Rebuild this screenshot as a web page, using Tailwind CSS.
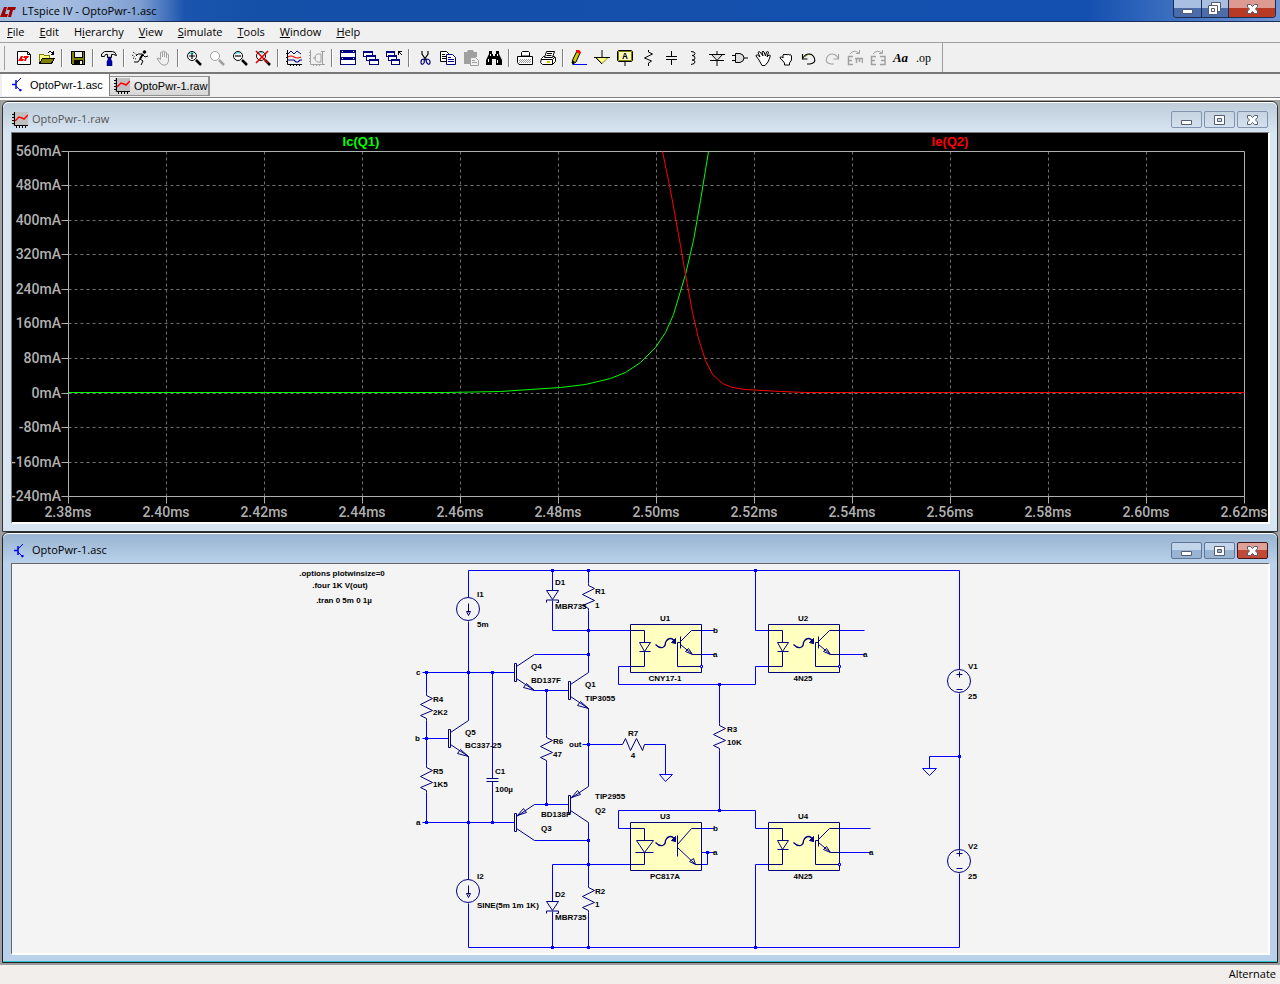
<!DOCTYPE html>
<html lang="en">
<head>
    <meta charset="UTF-8">
    <title>LTspice IV - OptoPwr-1.asc</title>
    <script src="https://cdn.jsdelivr.net/npm/@tailwindcss/browser@4"></script>
</head>
<body class="flex min-h-screen flex-col bg-[#f0f0f0] font-['Open_Sans',sans-serif] text-[11px] text-black">
    <!-- Shared symbols -->
    <svg class="hidden">
        <defs>
            <g id="logo"><path fill="#a00000" d="M4 3h3L5 10h3l-1 3H0zM8 3h8l-1 3h-2l-2 7H8l2-7H7z"/></g>
            <g id="asc" fill="none" stroke="#00f"><path stroke-width="1.500" d="M2 7.500h4M6 3v9"/><path d="M6 6l5-5M6 9l5 5"/><path fill="#00f" d="M9.500 13.500l1.500-1.500v2z"/></g>
            <g id="raw"><path fill="#c0c0c0" d="M1 0h15v14H1z"/><path fill="none" stroke="#000" d="M2.500 0v13.500H16M0 2.500h2M0 5.500h2M0 8.500h2M0 11.500h2M4.500 14v2M7.500 14v2M10.500 14v2M13.500 14v2"/><path fill="none" stroke="#f00" stroke-width="1.500" d="M3 9l4-4 3 1 2 1 4-4"/></g>
            <g id="min"><path fill="#fff" stroke="#555b70" d="M.5 7.500h10v4H.5z"/></g>
            <g id="max"><path fill="#fff" fill-rule="evenodd" stroke="#555b70" d="M.5 2.500h10v9H.5zM3.500 5.500h4v3h-4z"/></g>
            <g id="close"><path fill="#fff" stroke="#555b70" d="M.5 2.500h3l2 2 2-2h3v2L8.500 7l2 2v2.500h-3l-2-2-2 2h-3V9l2-2-2-2z"/></g>
            <g id="mag"><circle cx="6" cy="6" r="4.500" fill="#fff" stroke="currentColor"/><path stroke="currentColor" stroke-width="2.500" d="M10 10l5 5"/></g>
            <g id="resv"><path d="M0 0v2l6 3-12 6 12 6-12 5 6 3v2"/></g>
            <g id="npn"><path d="M-20-9h2V9h-2zM-18-6L0-18M-18 6L0 18M-11 15l3-4 8 7z"/></g>
            <g id="pnp"><path d="M-20-9h2V9h-2zM-18-6L0-18M-18 6L0 18M-17-7l6-7 3 4z"/></g>
            <g id="diode"><path d="M-6 0H6L0 9zM-6 12V9.500H6V12h-2"/></g>
            <g id="light"><path d="M25 20q4 4 7 3t3-5q2-4 5-4t5 5" stroke-width="1.300"/><path fill="#000080" d="M41 18l4 1v-5z"/></g>
            <g id="opto">
                <path fill="#ffffc0" d="M0 0h71v48H0z"/>
                <path d="M0 6h14v12M9 18h11l-6 9zM9 27h11M14 27v15H0M50 12v12M50 18h-3v24h24M50 17L61 6h10M50 20l12 10h9M55 27l3-3 4 6z"/>
                <use href="#light"/>
                <path stroke="#00f" fill="#fff" d="M70 41h2v2h-2z"/>
            </g>
        </defs>
    </svg>

    <!-- Title bar -->
    <header class="flex h-[22px] items-start border-b border-[#1a2d58] bg-[linear-gradient(90deg,#9fb8de_0,#a8bfe2_60px,#7f9fd2_140px,#1a54ae_185px,#1450a8_260px,#1450b0_85%,#6f96d4_100%)]">
        <svg class="mt-1 size-4" viewBox="0 0 16 16"><use href="#logo"/></svg>
        <h1 class="ml-1.5 flex-1 text-[11px] leading-[21px]">LTspice IV - OptoPwr-1.asc</h1>
        <div class="mr-1 flex h-[18px] overflow-hidden rounded-b border border-t-0 border-[#1b2b52]">
            <button aria-label="Minimize" class="grid w-7 place-items-center border-r border-[#1b2b52] bg-linear-to-b from-[#a9bfe2] from-50% to-[#4a6cab] to-50%"><svg class="h-3.5 w-[11px]" viewBox="0 0 11 14"><use href="#min"/></svg></button>
            <button aria-label="Restore" class="grid w-[27px] place-items-center border-r border-[#1b2b52] bg-linear-to-b from-[#a9bfe2] from-50% to-[#4a6cab] to-50%"><svg class="size-3.5" viewBox="0 0 14 14"><path fill="#fff" stroke="#555b70" d="M3.500.5h9v9h-9z"/><path fill="#fff" fill-rule="evenodd" stroke="#555b70" d="M.5 3.500h9v9h-9zM3.500 6.500h3v3h-3z"/></svg></button>
            <button aria-label="Close" class="grid w-[46px] place-items-center bg-linear-to-b from-[#dc9a90] from-50% to-[#b83a24] to-50%"><svg class="h-3.5 w-[11px]" viewBox="0 0 11 14"><use href="#close"/></svg></button>
        </div>
    </header>

    <!-- Menu bar -->
    <nav class="flex h-5 items-center gap-[15px] px-[7px] text-[11px]">
        <button><u>F</u>ile</button>
        <button><u>E</u>dit</button>
        <button>H<u>i</u>erarchy</button>
        <button><u>V</u>iew</button>
        <button><u>S</u>imulate</button>
        <button><u>T</u>ools</button>
        <button><u>W</u>indow</button>
        <button><u>H</u>elp</button>
    </nav>

    <!-- Toolbar -->
    <div class="flex h-8 items-center border-t border-b-2 border-t-[#a0a0a0] border-b-[#787878] pl-1 [&>button]:grid [&>button]:w-[23px] [&>button]:place-items-center [&_svg]:size-4 [&>i]:mx-[3px] [&>i]:h-[18px] [&>i]:w-0.5 [&>i]:border-r [&>i]:border-l [&>i]:border-l-[#808080] [&>i]:border-r-white">
        <span class="mr-[7px] h-6 w-px bg-[#a0a0a0]"></span>
        <button aria-label="New schematic"><svg viewBox="0 0 16 16"><path fill="#fff" stroke="#000" d="M1.500 1.500h10l3 3v10h-13z"/><path fill="none" stroke="#000" d="M11.500 1.500v3h3"/><path fill="#f00" d="M5 6h2L6 9h2l-1 2H2zM8 6h5l-1 2h-1l-1 3H8l1-3H7z"/></svg></button>
        <button aria-label="Open"><svg viewBox="0 0 16 16" shape-rendering="crispEdges"><path fill="#ffff80" stroke="#808000" d="M.5 13.500v-9h4l1 1h5v3"/><path fill="#808000" stroke="#000" d="M.5 13.500l3-5h12l-3 5z"/><path fill="none" stroke="#000" d="M9 2.500q3-2 5 1M14.500 1v3h-3"/></svg></button>
        <i></i>
        <button aria-label="Save"><svg viewBox="0 0 16 16" shape-rendering="crispEdges"><path fill="#808000" stroke="#000" d="M1.500 1.500h13v13h-12l-1-1z"/><path fill="#f0f0f0" stroke="#000" d="M4 1.500h8v6H4z"/><path d="M4 10h9v5H4z"/><path fill="#fff" d="M10 11h2v3h-2z"/></svg></button>
        <i></i>
        <button aria-label="Control panel"><svg viewBox="0 0 16 16"><path fill="#e8e8e8" stroke="#000" d="M3.500 1.500h8q3 0 4 4l-3-1h-2v3h-4v-3h-2l-1 2h-3V4z"/><path fill="#0000c0" stroke="#000" stroke-width=".5" d="M7 7h3v3l1 1v5H6v-5l1-1z"/></svg></button>
        <i></i>
        <button aria-label="Run"><svg viewBox="0 0 16 16" fill="none" stroke="#000"><circle cx="12.500" cy="2" r="1.300" fill="#000"/><path stroke-width="2" d="M11 4L8 9"/><path d="M10 4H6L4 6M11 5l2 2 3-1M8 9l3 2-2 4M8 9l-2 3H2"/><path stroke-dasharray="1 1" d="M1 2l4 3M0 5l3 2M1 8l3 1"/></svg></button>
        <button aria-label="Halt"><svg viewBox="0 0 16 16" fill="none" stroke="#a0a0a0"><path d="M5.500 9V3q0-1 1-1t1 1v4V2q0-1 1-1t1 1v5V3q0-1 1-1t1 1v5V5q0-1 1-1t1 1v6q-1 4-3 4H8q-2 0-5-5-2-2 0-2t2.500 2"/></svg></button>
        <i></i>
        <button aria-label="Zoom in"><svg viewBox="0 0 16 16"><use href="#mag"/><path stroke="#00c0c0" d="M3 4q2-2 5-1" fill="none"/><path stroke="#000" stroke-width="1.200" d="M3 6h6M6 3v6"/></svg></button>
        <button aria-label="Pan" class="text-[#a0a0a0]"><svg viewBox="0 0 16 16"><use href="#mag"/></svg></button>
        <button aria-label="Zoom out"><svg viewBox="0 0 16 16"><use href="#mag"/><path stroke="#00c0c0" d="M3 4q2-2 5-1" fill="none"/><path stroke="#000" stroke-width="1.200" d="M3 6h6"/></svg></button>
        <button aria-label="Zoom full"><svg viewBox="0 0 16 16"><use href="#mag"/><path stroke="#00c0c0" d="M3 4q2-2 5-1" fill="none"/><path stroke="#e00000" stroke-width="1.600" d="M1 1l12 12M13 1L1 13"/></svg></button>
        <i></i>
        <button aria-label="Autorange"><svg viewBox="0 0 16 16" fill="none"><path stroke="#000" d="M1.500 0v14.500H16M0 3.500h2M0 7.500h2M0 11.500h2M4.500 14v2M7.500 14v2M10.500 14v2M13.500 14v2"/><path stroke="#000080" d="M2 4l3-3 3 3 3-3 4 3"/><path stroke="#f00" stroke-width="1.200" d="M2 7q3-2 6 0t7 0"/><path stroke="#000080" stroke-width="1.200" d="M2 10h6l2 2h2l2-2h2"/></svg></button>
        <button aria-label="Zoom back"><svg viewBox="0 0 16 16" fill="none" stroke="#a0a0a0"><path d="M1.500 0v14.500H16M0 2.500h2M0 5.500h2M0 8.500h2M0 11.500h2M4.500 14v2M7.500 14v2M10.500 14v2M13.500 1v14M12 1.500h4"/><path d="M12 4q-6-1-6 4t6 4zM4 8h3"/></svg></button>
        <i></i>
        <button aria-label="Tile"><svg viewBox="0 0 16 16" shape-rendering="crispEdges"><path fill="#fff" stroke="#000080" d="M.5.5h15v7H.5zM.5 7.500h15v7H.5z"/><path fill="#000080" d="M0 0h16v3H0zM0 7h16v3H0z"/><path fill="#fff" d="M2 1h1v1H2zM13 1h1v1h-1zM2 8h1v1H2zM13 8h1v1h-1z"/></svg></button>
        <button aria-label="Cascade"><svg viewBox="0 0 16 16" shape-rendering="crispEdges" fill="#fff" stroke="#000080"><path d="M.5 1.500h9v5h-9zM3.500 5.500h9v5h-9zM6.500 9.500h9v5h-9z"/><path stroke-width="2" d="M0 2h10M3 6h10M6 10h10"/></svg></button>
        <button aria-label="Close all"><svg viewBox="0 0 16 16" shape-rendering="crispEdges" fill="#fff" stroke="#000080"><path d="M.5 1.500h8v5h-8zM2.500 5.500h8v5h-8zM5.500 9.500h8v5h-8z"/><path stroke-width="2" d="M0 2h9M2 6h9M5 10h9"/><path stroke="#000" fill="none" d="M12 1.500h4M12.500 1v4M13 2l3 3"/></svg></button>
        <i></i>
        <button aria-label="Cut"><svg viewBox="0 0 16 16" fill="none"><path stroke="#000" stroke-width="1.200" d="M5 1v3l4 6M11 1v3l-4 6"/><path stroke="#000080" stroke-width="1.200" d="M7 9q-3 0-3 3t2 2 1-5M9 9q4 0 4 3t-2 2-2-5"/></svg></button>
        <button aria-label="Copy"><svg viewBox="0 0 16 16" fill="#fff"><path stroke="#000" d="M.5 1.500h6l2 2v8h-8z"/><path stroke="#000" d="M2 4.500h3M2 6.500h4M2 8.500h4"/><path stroke="#000080" d="M6.500 4.500h6l3 3v7h-9z"/><path stroke="#000080" d="M8 7.500h3M8 9.500h6M8 11.500h6"/></svg></button>
        <button aria-label="Paste"><svg viewBox="0 0 16 16"><path fill="#a0a0a0" d="M1 2h3l1-2h5l1 2h3v5H8v7H1z"/><path fill="#f0f0f0" stroke="#a0a0a0" d="M7.500 7.500h5l3 3v5h-8zM9 10.500h3M9 12.500h5"/></svg></button>
        <button aria-label="Find"><svg viewBox="0 0 16 16"><path d="M3 1h3v3h1v2h2V4h1V1h3v3l3 6v5h-6V9H6v6H0v-5l3-6z"/><path stroke="#fff" d="M4.500 4v2M2.500 9v3M11.500 4v2M11.500 10v3"/></svg></button>
        <i></i>
        <button aria-label="Print preview"><svg viewBox="0 0 16 16" fill="#fff" stroke="#000"><path d="M.5 6.500h15v8H2l-1.500-2zM4.500 6V2.500l1-1h6l1 1V6z"/><path stroke="#999" stroke-dasharray="1 1" d="M3 9.500h11M2 10.500h12M3 11.500h11M2 12.500h12"/></svg></button>
        <button aria-label="Print"><svg viewBox="0 0 16 16" fill="#fff" stroke="#000"><path d="M1.500 8.500l2-2h11l1 1v4l-3 3h-10l-2-2z"/><path d="M4.500 7.500l2-6h8l-2 6zM7 3.500h5M6.500 5.500h5"/><path fill="none" d="M1 9.500h11.500v5M13 9l2-2"/><path stroke="#cc0" stroke-width="2" d="M7 12h3"/></svg></button>
        <i></i>
        <button aria-label="Wire"><svg viewBox="0 0 16 16"><path fill="#cc0" stroke="#000" d="M6 1l3 2-4 9-3 2-1-1 1-4z"/><path fill="#f00" d="M5 0h3l2 2-1 2-4-2z"/><path d="M1 10l3 2-3 3z"/><path stroke="#00f" d="M2 14.500h14"/></svg></button>
        <button aria-label="Ground"><svg viewBox="0 0 16 16"><path fill="#ffff80" stroke="#808000" d="M2 7.500h12l-6 6z"/><path stroke="#000" fill="none" d="M8 0v7.500M0 7.500h16M2 8l6 6"/></svg></button>
        <button aria-label="Label net"><svg viewBox="0 0 16 16"><path fill="#ffffc0" stroke="#808000" d="M1.500 1.500h13v9h-13z"/><path fill="none" stroke="#000" d="M1.500.5h13l1 1v9l-1 1h-13l-1-1v-9zM8 11v5"/><text x="8" y="9" text-anchor="middle" class="font-['Liberation_Mono',monospace] text-[9px] font-bold">A</text></svg></button>
        <button aria-label="Resistor"><svg viewBox="0 0 16 16" fill="none" stroke="#000"><path d="M8.500 0v2l4 2-8 4 7 3-3 2v3"/></svg></button>
        <button aria-label="Capacitor"><svg viewBox="0 0 16 16" shape-rendering="crispEdges" stroke="#000"><path d="M8.500 1v5M3 6.500h11M3 9.500h11M8.500 10v5"/></svg></button>
        <button aria-label="Inductor"><svg viewBox="0 0 16 16" fill="none" stroke="#000"><path d="M5 1.500q4 0 4 2t-3 2q3 0 3 2.500T6 10q3 0 3 2t-4 2.500"/></svg></button>
        <button aria-label="Diode"><svg viewBox="0 0 16 16" stroke="#000"><path fill="#ddd" d="M2.500 4.500h11l-5.500 6z"/><path d="M8 1v3M0 4.500h16M1 10.500h14M8 11v5"/></svg></button>
        <button aria-label="Component"><svg viewBox="0 0 16 16" fill="#ddd" stroke="#000"><path d="M3.500 3.500H8q4 1 4 4.500t-4 4.500H3.500zM0 5.500h3M0 10.500h3M12 8h4"/></svg></button>
        <button aria-label="Move"><svg viewBox="0 0 16 16" fill="#fff" stroke="#000"><path d="M4 10L1 6q0-1.500 1.500-1L5 7 3 2.500Q4 1 5 2l3 4-1-4q1-1.500 2 0l1.500 4 1-4q1-1 2 0L12 7l2-2q2 0 1 2l-2 5-3 3.500H7z"/></svg></button>
        <button aria-label="Drag"><svg viewBox="0 0 16 16" fill="#fff" stroke="#000"><path d="M5 11L2 8q0-1.500 1.500-1L5 8V5q1-1.500 2 0 1-2 2 0 1.500-1.500 2 0 2-1 2.500 1v4l-2 3v2h-5v-2z"/></svg></button>
        <button aria-label="Undo"><svg viewBox="0 0 16 16" fill="none"><path stroke="#a0a000" d="M4 7q4-5 8-1"/><path stroke="#000" stroke-width="1.100" d="M1.500 4v5h5M2 8q2-4 6-4t5.500 4.500T9 14H6"/></svg></button>
        <button aria-label="Redo"><svg viewBox="0 0 16 16" fill="none" stroke="#a0a0a0" stroke-width="1.100"><path d="M14.500 4v5h-5M14 8q-2-4-6-4T2.500 8.500 7 14h3"/></svg></button>
        <button aria-label="Rotate"><svg viewBox="0 0 16 16" fill="none" stroke="#a0a0a0"><path stroke-width="1.500" d="M6 6.500H1.500v8H6M1 10.500h4M8 8.500h8M9.500 9v4M12.500 9v3M15.500 9v4"/><path d="M3 4q4-5 9-1M12.500 0v3.500H9"/></svg></button>
        <button aria-label="Mirror"><svg viewBox="0 0 16 16" fill="none" stroke="#a0a0a0"><path stroke-width="1.500" d="M6 6.500H1.500v8H6M1 10.500h4M10 6.500h5v8h-5M11 10.500h4"/><path d="M3 4q4-5 9-1M12.500 0v3.500H9"/></svg></button>
        <button aria-label="Text" class="font-['Liberation_Serif',serif] text-[13px] font-bold italic">Aa</button>
        <button aria-label="SPICE directive" class="font-['Liberation_Serif',serif] text-xs">.op</button>
        <span class="ml-[7px] h-full w-px bg-[#a0a0a0]"></span>
    </div>

    <!-- Document tabs -->
    <div class="flex h-6 items-start border-b border-[#808080] bg-[#f0f0f0] pl-0.5 font-['Liberation_Sans',Arial,sans-serif] text-[11px] whitespace-nowrap">
        <button class="flex h-[22px] w-[108px] items-center gap-1 border-r border-[#808080] bg-white pl-2"><svg class="size-4" viewBox="0 0 16 16"><use href="#asc"/></svg>OptoPwr-1.asc</button>
        <button class="mt-0.5 flex h-5 w-[100px] items-center gap-1 border-t border-r-2 border-b border-[#909090] bg-linear-to-b from-[#f2f2f2] to-[#d6d6d6] pl-1"><svg class="size-4" viewBox="0 0 16 16"><use href="#raw"/></svg>OptoPwr-1.raw</button>
    </div>

    <main class="flex flex-1 flex-col border-t-2 border-white bg-[#a0a0a0] px-0.5 pt-px">
        <!-- Waveform window -->
        <section class="rounded-t-md border border-[#333] bg-[#d7e4f2] pr-[7px] pb-[7px] pl-2">
            <div class="-mr-[7px] -ml-2 flex h-[30px] items-center rounded-t-md border-t border-white bg-linear-to-b from-[#bfcddb] to-[#d7e4f2] px-[9px] pt-1">
                <svg class="size-4" viewBox="0 0 16 16"><use href="#raw"/></svg>
                <h2 class="ml-1 flex-1 text-[11px] text-[#555]">OptoPwr-1.raw</h2>
                <div class="flex gap-0.5 [&>button]:grid [&>button]:h-[17px] [&>button]:w-[31px] [&>button]:place-items-center [&>button]:rounded-xs [&>button]:border [&>button]:border-[#8394b0]">
                    <button aria-label="Minimize"><svg class="h-3.5 w-[11px]" viewBox="0 0 11 14"><use href="#min"/></svg></button>
                    <button aria-label="Maximize"><svg class="h-3.5 w-[11px]" viewBox="0 0 11 14"><use href="#max"/></svg></button>
                    <button aria-label="Close"><svg class="h-3.5 w-[11px]" viewBox="0 0 11 14"><use href="#close"/></svg></button>
                </div>
            </div>
            <div class="border-t border-r-2 border-b-2 border-l border-t-[#777] border-r-white border-b-white border-l-[#777] bg-black">
                <svg class="block h-auto w-full font-[Roboto,sans-serif] text-[14px] font-medium" viewBox="12 133 1256 389">
                    <g transform="translate(.5 .5)" fill="none">
                        <path stroke="#707070" stroke-dasharray="3 3" d="M166 151v345M264 151v345M362 151v345M460 151v345M558 151v345M656 151v345M754 151v345M852 151v345M950 151v345M1048 151v345M1146 151v345M68 185h1176M68 220h1176M68 254h1176M68 289h1176M68 323h1176M68 358h1176M68 393h1176M68 427h1176M68 462h1176"/>
                        <path stroke="#b0b0b0" d="M68 151h1176v345H68zM61 151h7M61 185h7M61 220h7M61 254h7M61 289h7M61 323h7M61 358h7M61 393h7M61 427h7M61 462h7M61 496h7M68 496v7M166 496v7M264 496v7M362 496v7M460 496v7M558 496v7M656 496v7M754 496v7M852 496v7M950 496v7M1048 496v7M1146 496v7M1244 496v7"/>
                        <path stroke="#0f0" d="M68 392H445L500 391L530 389L560 387L585 384L610 378L625 372L640 362L655 347L665 332L673 314L685 274L693 240L700 200L708 151"/>
                        <path stroke="#f00" d="M662 151L670 190L680 245L685 274L692 312L698 338L705 360L712 374L722 383L732 387L745 389L780 391L805 392H1244"/>
                    </g>
                    <g text-anchor="middle" class="font-['Liberation_Sans',Arial,sans-serif] text-[13px] font-bold">
                        <text x="361" y="146" fill="#0f0">Ic(Q1)</text>
                        <text x="950" y="146" fill="#f00">Ie(Q2)</text>
                    </g>
                    <g text-anchor="end" fill="#b0b0b0">
                        <text x="61" y="156">560mA</text>
                        <text x="61" y="190">480mA</text>
                        <text x="61" y="225">400mA</text>
                        <text x="61" y="259">320mA</text>
                        <text x="61" y="294">240mA</text>
                        <text x="61" y="328">160mA</text>
                        <text x="61" y="363">80mA</text>
                        <text x="61" y="398">0mA</text>
                        <text x="61" y="432">-80mA</text>
                        <text x="61" y="467">-160mA</text>
                        <text x="61" y="501">-240mA</text>
                    </g>
                    <g text-anchor="middle" fill="#b0b0b0">
                        <text x="68" y="517">2.38ms</text>
                        <text x="166" y="517">2.40ms</text>
                        <text x="264" y="517">2.42ms</text>
                        <text x="362" y="517">2.44ms</text>
                        <text x="460" y="517">2.46ms</text>
                        <text x="558" y="517">2.48ms</text>
                        <text x="656" y="517">2.50ms</text>
                        <text x="754" y="517">2.52ms</text>
                        <text x="852" y="517">2.54ms</text>
                        <text x="950" y="517">2.56ms</text>
                        <text x="1048" y="517">2.58ms</text>
                        <text x="1146" y="517">2.60ms</text>
                        <text x="1244" y="517">2.62ms</text>
                    </g>
                </svg>
            </div>
        </section>

        <!-- Schematic window -->
        <section class="rounded-t-md border border-[#222] bg-[#b9d1ea] pr-[7px] pl-2">
            <div class="-mr-[7px] -ml-2 flex h-[30px] items-center rounded-t-md border-t border-white bg-linear-to-b from-[#99b4d1] to-[#b9d1ea] px-[9px] pt-1">
                <svg class="size-4" viewBox="0 0 16 16"><use href="#asc"/></svg>
                <h2 class="ml-1 flex-1 text-[11px]">OptoPwr-1.asc</h2>
                <div class="flex gap-0.5 [&>button]:grid [&>button]:h-[17px] [&>button]:w-[31px] [&>button]:place-items-center [&>button]:rounded-xs [&>button]:border">
                    <button aria-label="Minimize" class="border-[#5f7596] bg-linear-to-b from-[#c3d5ea] from-50% to-[#98b4d2] to-50%"><svg class="h-3.5 w-[11px]" viewBox="0 0 11 14"><use href="#min"/></svg></button>
                    <button aria-label="Maximize" class="border-[#5f7596] bg-linear-to-b from-[#c3d5ea] from-50% to-[#98b4d2] to-50%"><svg class="h-3.5 w-[11px]" viewBox="0 0 11 14"><use href="#max"/></svg></button>
                    <button aria-label="Close" class="border-[#43141a] bg-linear-to-b from-[#dfa196] from-50% to-[#c04a35] to-50%"><svg class="h-3.5 w-[11px]" viewBox="0 0 11 14"><use href="#close"/></svg></button>
                </div>
            </div>
            <div class="border-t border-r-2 border-b-2 border-l border-t-[#666] border-r-white border-b-white border-l-[#666] bg-[#f4f4f4]">
                <svg class="block h-auto w-full font-['Liberation_Sans',Arial,sans-serif] text-[8px] font-bold" viewBox="12 564 1256 389">
                    <g transform="translate(.5 .5)" fill="none">
                        <!-- Wires -->
                        <g stroke="#00f">
                            <path d="M468 597v-27h491v99M468 621v99M468 756v123M468 903v44h491v-74M959 693v156M959 756h-30v12M922 768h14l-7 7z"/>
                            <path d="M552 570v20M552 600v30h78M588 570v13M588 610v62M534 654h54M422 672h92M534 690h34M588 708v78M426 672v21M422 738h26M426 720v45M426 792v30M422 822h92M492 672v106M492 781v41M546 690v45M546 762v42M534 804h34M588 822v63M534 840h54M552 901v-37h78M552 911v36M588 912v35"/>
                            <path d="M582 744h39M645 744h20v30M659 774h13l-7 7zM719 684v39M719 750v60M630 666h-12v18h137v-18h13M755 570v60h13M630 828h-12v-18h137v18h13M755 947v-83h13M701 630h13M701 654h13M839 630h25M839 654h25M701 828h13M701 852h13M707 852v12h-6M839 828h31M839 852h31"/>
                        </g>
                        <!-- Junctions -->
                        <g fill="#00f">
                            <path d="M551 569h3v3h-3zM587 569h3v3h-3zM754 569h3v3h-3zM587 629h3v3h-3zM587 653h3v3h-3zM425 671h3v3h-3zM467 671h3v3h-3zM491 671h3v3h-3zM425 737h3v3h-3zM545 689h3v3h-3zM587 743h3v3h-3zM545 803h3v3h-3zM425 821h3v3h-3zM467 821h3v3h-3zM491 821h3v3h-3zM587 839h3v3h-3zM587 863h3v3h-3zM551 946h3v3h-3zM587 946h3v3h-3zM754 946h3v3h-3zM718 683h3v3h-3zM718 809h3v3h-3zM706 851h3v3h-3zM958 755h3v3h-3z" transform="translate(-.5 -.5)"/>
                        </g>
                        <!-- Components -->
                        <g stroke="#000080">
                            <circle cx="467.500" cy="608.500" r="11.500"/><path d="M468 603v9M466 611h4l-2 4z"/>
                            <circle cx="467.500" cy="890.500" r="11.500"/><path d="M468 885v9M466 893h4l-2 4z"/>
                            <circle cx="958.500" cy="680.500" r="11.500"/><path d="M956 674h6M959 671v6M956 689h6"/>
                            <circle cx="958.500" cy="860.500" r="11.500"/><path d="M956 853h6M959 850v6M956 868h6"/>
                            <use href="#resv" x="588" y="583"/><use href="#resv" x="426" y="693"/><use href="#resv" x="426" y="765"/><use href="#resv" x="546" y="735"/><use href="#resv" x="719" y="723"/><use href="#resv" x="588" y="885"/>
                            <path d="M620 744h2l3-6 5 12 6-12 6 12 2-6h2"/>
                            <path d="M486 778h12M486 781h12"/>
                            <use href="#diode" x="552" y="590"/><use href="#diode" x="552" y="901"/>
                            <use href="#npn" x="534" y="672"/><use href="#npn" x="588" y="690"/><use href="#npn" x="468" y="738"/>
                            <use href="#pnp" x="534" y="822"/><use href="#pnp" x="588" y="804"/>
                            <use href="#opto" x="630" y="624"/><use href="#opto" x="768" y="624"/><use href="#opto" x="768" y="822"/>
                            <g transform="translate(630 822)">
                                <path fill="#ffffc0" d="M0 0h71v48H0z"/>
                                <path d="M0 6h14v12M6 18h17l-9 12zM5 30h18M14 30v12H0M47 13v21M47 22L61 6h10M47 25l18 17h6M59 39l4-3 2 6z"/>
                                <use href="#light"/>
                            </g>
                        </g>
                    </g>
                    <!-- Labels -->
                    <g>
                        <text x="477" y="597">I1</text><text x="477" y="627">5m</text>
                        <text x="555" y="585">D1</text><text x="555" y="609">MBR735</text>
                        <text x="595" y="594">R1</text><text x="595" y="608">1</text>
                        <text x="531" y="669">Q4</text><text x="531" y="683">BD137F</text>
                        <text x="585" y="687">Q1</text><text x="585" y="701">TIP3055</text>
                        <text x="433" y="702">R4</text><text x="433" y="715">2K2</text>
                        <text x="465" y="735">Q5</text><text x="465" y="748">BC337-25</text>
                        <text x="553" y="744">R6</text><text x="553" y="757">47</text>
                        <text x="495" y="774">C1</text><text x="495" y="792">100µ</text>
                        <text x="433" y="774">R5</text><text x="433" y="787">1K5</text>
                        <text x="541" y="817">BD138F</text><text x="541" y="831">Q3</text>
                        <text x="595" y="799">TIP2955</text><text x="595" y="813">Q2</text>
                        <text x="477" y="879">I2</text><text x="477" y="908">SINE(5m 1m 1K)</text>
                        <text x="555" y="897">D2</text><text x="555" y="920">MBR735</text>
                        <text x="595" y="894">R2</text><text x="595" y="907">1</text>
                        <text x="727" y="732">R3</text><text x="727" y="745">10K</text>
                        <text x="968" y="669">V1</text><text x="968" y="699">25</text>
                        <text x="968" y="849">V2</text><text x="968" y="879">25</text>
                        <text x="416" y="675">c</text><text x="415" y="741">b</text><text x="416" y="825">a</text>
                        <text x="713" y="633">b</text><text x="713" y="657">a</text><text x="863" y="657">a</text>
                        <text x="713" y="831">b</text><text x="713" y="855">a</text><text x="869" y="855">a</text>
                        <text x="569" y="747">out</text>
                    </g>
                    <g text-anchor="middle">
                        <text x="342" y="576">.options plotwinsize=0</text>
                        <text x="340" y="588">.four 1K V(out)</text>
                        <text x="344" y="603">.tran 0 5m 0 1µ</text>
                        <text x="665" y="621">U1</text><text x="665" y="681">CNY17-1</text>
                        <text x="803" y="621">U2</text><text x="803" y="681">4N25</text>
                        <text x="665" y="819">U3</text><text x="665" y="879">PC817A</text>
                        <text x="803" y="819">U4</text><text x="803" y="879">4N25</text>
                        <text x="633" y="736">R7</text><text x="633" y="758">4</text>
                    </g>
                </svg>
            </div>
            <div class="-mr-[7px] -ml-2 h-[7px] border-b border-[#30c0d8]"></div>
        </section>
    </main>

    <!-- Status bar -->
    <footer class="flex h-[21px] items-center justify-end border-t-2 border-[#9a9a9a] bg-[#f1eeec] px-1 text-[11px]">Alternate</footer>
</body>
</html>
